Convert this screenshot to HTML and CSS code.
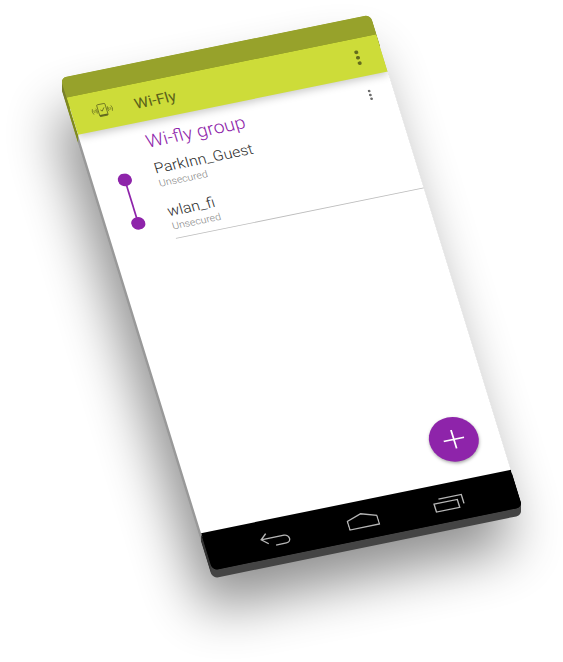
FILE: index.html
```html
<!DOCTYPE html>
<html lang="en">
<head>
<meta charset="utf-8">
<title>Wi-Fly</title>
<link rel="stylesheet" href="styles.css">
</head>
<body>
<main class="scene">
  <div class="shadow"><div class="plane"></div></div>
  <div class="slab lowest"><div class="plane edge"></div></div>
  <div class="slab" style="--depth:7px"><div class="plane edge"></div></div>
  <div class="slab" style="--depth:6px"><div class="plane edge"></div></div>
  <div class="slab" style="--depth:5px"><div class="plane edge"></div></div>
  <div class="slab" style="--depth:4px"><div class="plane edge"></div></div>
  <div class="slab" style="--depth:3px"><div class="plane edge"></div></div>
  <div class="slab" style="--depth:2px"><div class="plane edge"></div></div>
  <div class="slab" style="--depth:1px"><div class="plane edge"></div></div>
  <div class="plane phone">
    <div class="status"></div>
    <header class="appbar">
      <svg class="logo" width="26" height="20" viewBox="0 0 26 20" fill="none" stroke="#5f6620" stroke-width=".9">
        <rect x="8.200" y="2.500" width="9.600" height="15" rx="1"/>
        <path d="M8.500 16.500h9" stroke-width="1.800"/>
        <path d="M10.800 9.500l1.700 1.800 3-4"/>
        <path d="M3.800 8.500q-1 1.500 0 3M5.200 8.500q1 1.500 0 3M2.300 6.500q-2 3.500 0 7M6.200 6.800q1.500 3.200 0 6.400M22.200 8.500q1 1.500 0 3M20.800 8.500q-1 1.500 0 3M23.700 6.500q2 3.500 0 7M19.800 6.800q-1.500 3.200 0 6.400" stroke-width=".75"/>
      </svg>
      <h1 class="app-title">Wi-Fly</h1>
      <svg class="more" width="6" height="20" viewBox="0 0 6 20" fill="#646b1d"><circle cx="3" cy="3" r="2.300"/><circle cx="3" cy="10" r="2.300"/><circle cx="3" cy="17" r="2.300"/></svg>
    </header>
    <section class="content">
      <div class="group">
        <svg class="link" width="16" height="72" viewBox="0 0 16 72" fill="#8e24aa"><path d="M7 8h2v56H7z"/><circle cx="8" cy="8" r="8"/><circle cx="8" cy="64" r="8"/></svg>
        <div class="details">
          <div class="group-head">
            <h2 class="group-title">Wi-fly group</h2>
            <svg class="more-small" width="4" height="14" viewBox="0 0 4 14" fill="#6b6b6b"><circle cx="2" cy="2" r="1.600"/><circle cx="2" cy="7" r="1.600"/><circle cx="2" cy="12" r="1.600"/></svg>
          </div>
          <div class="network"><div class="name">ParkInn_Guest</div><div class="security">Unsecured</div></div>
          <div class="network"><div class="name">wlan_fi</div><div class="security">Unsecured</div></div>
        </div>
      </div>
      <button class="fab" aria-label="Add">
        <svg width="24" height="24" viewBox="0 0 24 24" stroke="#fff" stroke-width="2"><path d="M12 0v24M0 12h24"/></svg>
      </button>
    </section>
    <nav class="navbar">
      <svg width="36" height="24" viewBox="0 0 36 24"><path d="M8.500 5.500L1.500 12l7 6.500M1.500 12H28a5 5 0 0 1 0 10H16"/></svg>
      <svg width="36" height="24" viewBox="0 0 36 24"><path d="M.8 11L18 5l17.200 6v11H.8z"/></svg>
      <svg width="36" height="24" viewBox="0 0 36 24"><path d="M1.500 11.500h27v10.200h-27zM8 6.500h26.500V18"/></svg>
    </nav>
  </div>
</main>
</body>
</html>
```
FILE: styles.css
```css
* { box-sizing: border-box; }

body {
  margin: 0;
  background: #fff;
  font-family: Roboto, "Liberation Sans", sans-serif;
}

.scene {
  position: relative;
  width: 563px;
  height: 662px;
  overflow: hidden;
}

/* The tilted face shared by the screen, its edge layers and its shadow. */
.plane {
  position: absolute;
  top: 0;
  left: 0;
  width: 360px;
  height: 633px;
  border-radius: 7px;
  transform-origin: 0 0;
  transform: matrix(.8606, -.1758, .2402, .778, 60.5, 78);
}

.shadow {
  position: absolute;
  inset: 0;
  transform: translate(-7px, 39px);
  filter: blur(27px);
  opacity: .44;
}
.shadow .plane { background: #000; }

.slab {
  position: absolute;
  inset: 0;
  transform: translateY(var(--depth));
}
.lowest { --depth: 8px; }
.edge {
  background: linear-gradient(#79802a 25px, #7f8a1c 25px 73px, #999 73px 585px, #333 585px 620px, #444 628px);
}

.phone {
  display: flex;
  flex-direction: column;
  overflow: hidden;
  background: linear-gradient(#97a22b 40px, #fff 40px 590px, #000 590px);
}

.status { flex: 0 0 25px; background: #97a22b; }

.appbar {
  z-index: 1;
  flex: 0 0 48px;
  display: flex;
  align-items: center;
  padding: 0 25px 0 22px;
  background: #cddc39;
  box-shadow: 0 3px 10px rgba(0, 0, 0, .22);
  clip-path: inset(0 0 -20px 0);
}
.app-title {
  margin: 0 auto 0 24px;
  color: #5a6119;
  font-size: 18px;
  font-weight: 400;
}

.content { position: relative; flex: 0 0 512px; }

.group { display: flex; padding-left: 28px; }
.link { flex: none; margin: 58px 28px 0 0; }
.details {
  flex: 1;
  height: 150px;
  border-bottom: 1px solid #bdbdbd;
}
.group-head {
  display: flex;
  justify-content: space-between;
  padding: 12px 25px 0 0;
}
.group-title {
  margin: 0;
  color: #8e24aa;
  font-size: 22px;
  line-height: 28px;
  font-weight: 300;
}
.more-small { margin-top: 5px; }

.network { height: 55px; padding-top: 10px; }
.name { color: #2b2b2b; font-size: 18px; line-height: 20px; font-weight: 300; }
.security { color: #858585; font-size: 12px; line-height: 18px; font-weight: 300; }

.fab {
  position: absolute;
  right: 24px;
  bottom: 23px;
  display: grid;
  place-items: center;
  width: 56px;
  height: 56px;
  padding: 0;
  border: 0;
  border-radius: 50%;
  background: #8e24aa;
  box-shadow: 0 2px 4px rgba(0, 0, 0, .35);
}

.navbar {
  flex: 0 0 48px;
  display: flex;
  align-items: center;
  justify-content: space-between;
  padding: 0 61px 2px 62px;
  background: #000;
}
.navbar svg { fill: none; stroke: #b5b5b5; stroke-width: 1.6; }
```
